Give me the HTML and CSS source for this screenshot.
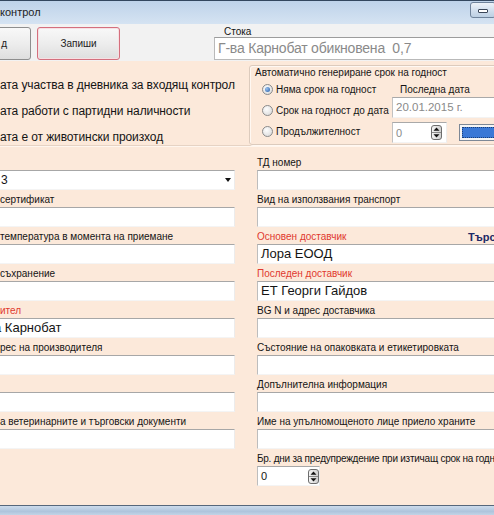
FILE: index.html
```html
<!DOCTYPE html>
<html lang="bg">
<head>
<meta charset="utf-8">
<title>контрол</title>
<link rel="stylesheet" href="styles.css">
</head>
<body>
<div class="window">
  <header class="titlebar">
    <span class="title">контрол</span>
    <span class="min-btn"><span class="min-glyph"></span></span>
  </header>
  <div class="toolbar">
    <button class="btn btn-exit">д</button>
    <button class="btn btn-save">Запиши</button>
    <div class="stock">
      <div class="stock-label">Стока</div>
      <div class="stock-input">Г-ва Карнобат обикновена&nbsp; 0,7</div>
    </div>
  </div>
  <main class="form">
    <div class="top">
      <div class="checks">
        <div class="check">ата участва в дневника за входящ контрол</div>
        <div class="check">ата работи с партидни наличности</div>
        <div class="check">ата е от животински произход</div>
      </div>
      <div class="expiry">
        <div class="legend">Автоматично генериране срок на годност</div>
        <div class="exp-body">
          <div class="radios">
            <div class="radio-row"><span class="radio on"></span>Няма срок на годност</div>
            <div class="radio-row"><span class="radio"></span>Срок на годност до дата</div>
            <div class="radio-row"><span class="radio"></span>Продължителност</div>
          </div>
          <div class="exp-right">
            <div class="last-label">Последна дата</div>
            <div class="date-input">20.01.2015 г.</div>
            <div class="spin-row">
              <div class="num-input"><span>0</span>
                <svg class="spin" width="11" height="15" viewBox="0 0 11 15"><defs><linearGradient id="sg" x1="0" y1="0" x2="1" y2="0"><stop offset="0" stop-color="#f6f6f6"/><stop offset="1" stop-color="#cfcfcf"/></linearGradient></defs><rect x="0.5" y="0.5" width="10" height="14" rx="2.5" fill="url(#sg)" stroke="#6d6d6d"/><line x1="1" y1="7.5" x2="10" y2="7.5" stroke="#8a8a8a"/><path d="M5.5 2.5 L8.5 5.8 L2.5 5.8 Z" fill="#111"/><path d="M2.5 9.2 L8.5 9.2 L5.5 12.5 Z" fill="#111"/></svg>
              </div>
              <div class="blue-btn"><span class="blue-fill"></span></div>
            </div>
          </div>
        </div>
      </div>
    </div>
    <div class="fields">
      <div class="col col-left">
        <div class="field"><div class="lbl"></div><div class="inp combo"><span>3</span><span class="arrow"></span></div></div>
        <div class="field"><div class="lbl">сертификат</div><div class="inp"></div></div>
        <div class="field"><div class="lbl">температура в момента на приемане</div><div class="inp"></div></div>
        <div class="field"><div class="lbl">съхранение</div><div class="inp"></div></div>
        <div class="field"><div class="lbl red">ител</div><div class="inp"><span class="cut">а Карнобат</span></div></div>
        <div class="field"><div class="lbl">рес на производителя</div><div class="inp"></div></div>
        <div class="field"><div class="lbl"></div><div class="inp"></div></div>
        <div class="field"><div class="lbl">а ветеринарните и търговски документи</div><div class="inp"></div></div>
      </div>
      <div class="col col-right">
        <div class="field"><div class="lbl">ТД номер</div><div class="inp"></div></div>
        <div class="field"><div class="lbl">Вид на използвания транспорт</div><div class="inp"></div></div>
        <div class="field"><div class="lbl split"><span class="lbl-main red">Основен доставчик</span><span class="search">Търсене</span></div><div class="inp">Лора ЕООД</div></div>
        <div class="field"><div class="lbl red">Последен доставчик</div><div class="inp">ЕТ Георги Гайдов</div></div>
        <div class="field"><div class="lbl">BG N и адрес доставчика</div><div class="inp"></div></div>
        <div class="field"><div class="lbl">Състояние на опаковката и етикетировката</div><div class="inp"></div></div>
        <div class="field"><div class="lbl">Допълнителна информация</div><div class="inp"></div></div>
        <div class="field"><div class="lbl">Име на упълномощеното лице приело храните</div><div class="inp"></div></div>
        <div class="field warn"><div class="lbl tight">Бр. дни за предупреждение при изтичащ срок на годност</div>
          <div class="inp num"><span>0</span>
            <svg class="spin" width="11" height="15" viewBox="0 0 11 15"><defs><linearGradient id="sg2" x1="0" y1="0" x2="1" y2="0"><stop offset="0" stop-color="#f6f6f6"/><stop offset="1" stop-color="#cfcfcf"/></linearGradient></defs><rect x="0.5" y="0.5" width="10" height="14" rx="2.5" fill="url(#sg2)" stroke="#6d6d6d"/><line x1="1" y1="7.5" x2="10" y2="7.5" stroke="#8a8a8a"/><path d="M5.5 2.5 L8.5 5.8 L2.5 5.8 Z" fill="#111"/><path d="M2.5 9.2 L8.5 9.2 L5.5 12.5 Z" fill="#111"/></svg>
          </div>
        </div>
      </div>
    </div>
  </main>
  <div class="frame-bottom"></div>
</div>
</body>
</html>
```
FILE: styles.css
```css
html, body {
  margin: 0;
  padding: 0;
}
body {
  width: 494px;
  height: 515px;
  overflow: hidden;
  font-family: "Liberation Sans", Arial, sans-serif;
  color: #141414;
  background: #fce9da;
}
.window {
  width: 494px;
  height: 515px;
  display: flex;
  flex-direction: column;
  overflow: hidden;
}

/* title bar */
.titlebar {
  height: 24px;
  flex: none;
  box-sizing: border-box;
  border-top: 1px solid #33475f;
  background: linear-gradient(#bed3ea, #d5e3f2);
  display: flex;
  align-items: flex-start;
}
.title {
  font-size: 11px;
  line-height: 23px;
  color: #1e1e1e;
  white-space: nowrap;
}
.min-btn {
  margin-left: auto;
  margin-right: -2px;
  margin-top: 1px;
  width: 26px;
  height: 16px;
  box-sizing: border-box;
  border: 1px solid #6f839b;
  border-radius: 3px;
  background: linear-gradient(#eef3f9, #d3e0ee 50%, #bccfe3);
  display: flex;
  align-items: center;
  justify-content: center;
}
.min-glyph {
  width: 10px;
  height: 4px;
  box-sizing: border-box;
  border: 1px solid #3a4658;
  background: #fff;
  border-radius: 1px;
  margin-top: 2px;
}

/* toolbar */
.toolbar {
  height: 37px;
  flex: none;
  box-sizing: border-box;
  padding-top: 3px;
  background: #f2f2f2;
  display: flex;
  align-items: flex-start;
}
.btn {
  flex: none;
  height: 33px;
  box-sizing: border-box;
  padding: 0;
  font-family: "Liberation Sans", Arial, sans-serif;
  font-size: 10px;
  color: #222;
  border: 1px solid #8e8e8e;
  border-radius: 3px;
  background: linear-gradient(#f8f8f8, #ededed 50%, #dedede);
}
.btn-exit {
  width: 75px;
  margin-left: -44px;
  text-align: right;
  padding-right: 23px;
}
.btn-save {
  width: 83px;
  margin-left: 6px;
  border-color: #d46f7d;
  box-shadow: inset 0 0 0 1px #f6e0e3;
}
.stock {
  margin-left: 94px;
  margin-top: -3px;
  flex: none;
}
.stock-label {
  font-size: 10px;
  height: 13px;
  line-height: 10px;
  padding-top: 3px;
  padding-left: 10px;
  box-sizing: border-box;
}
.stock-input {
  width: 300px;
  height: 23px;
  box-sizing: border-box;
  border: 1px solid #b9b9b9;
  border-top-color: #9c9c9c;
  background: #fff;
  font-size: 14px;
  letter-spacing: -0.2px;
  line-height: 21px;
  color: #8a8a8a;
  padding-left: 3px;
  white-space: nowrap;
}

/* form */
.form {
  flex: 1;
  background: #fce9da;
}
.top {
  display: flex;
  padding-top: 3px;
  height: 81px;
  border-bottom: 1px solid #e6d3c4;
  box-shadow: 0 1px 0 #fff6ee;
}
.checks {
  width: 249px;
  flex: none;
  box-sizing: border-box;
  padding-top: 8px;
}
.check {
  font-size: 12px;
  line-height: 26px;
  letter-spacing: -0.1px;
  white-space: nowrap;
}
.expiry {
  width: 260px;
  height: 80px;
  margin-top: 1px;
  flex: none;
  box-sizing: border-box;
  border: 1px solid #dccbbd;
  border-radius: 3px;
  box-shadow: inset 1px 1px 0 #fff8f2, 1px 1px 0 #fff8f2;
}
.legend {
  font-size: 10px;
  line-height: 13px;
  padding-left: 5px;
  white-space: nowrap;
}
.exp-body {
  display: flex;
}
.radios {
  margin-left: 12px;
  width: 130px;
  flex: none;
}
.radio-row {
  display: flex;
  align-items: center;
  height: 21px;
  font-size: 10px;
  white-space: nowrap;
}
.radio {
  width: 11px;
  height: 11px;
  box-sizing: border-box;
  border-radius: 50%;
  border: 1px solid #8a8a8a;
  background: radial-gradient(circle at 40% 35%, #fdfdfd, #d6d6d6);
  margin-right: 3px;
  display: flex;
  align-items: center;
  justify-content: center;
}
.radio.on::after {
  content: "";
  width: 5px;
  height: 5px;
  border-radius: 50%;
  background: radial-gradient(circle at 35% 35%, #9cc2ee, #1f5aa8);
}
.exp-right {
  display: flex;
  flex-direction: column;
}
.last-label {
  font-size: 10px;
  line-height: 13px;
  margin-top: 4px;
  padding-left: 8px;
  white-space: nowrap;
}
.date-input {
  margin-top: 1px;
  width: 110px;
  height: 21px;
  box-sizing: border-box;
  background: #fff;
  border: 1px solid;
  border-color: #a9a9a9 #eeeeee #f3f3f3 #c2c2c2;
  font-size: 11.5px;
  line-height: 19px;
  color: #8a8a8a;
  padding-left: 3px;
  white-space: nowrap;
}
.spin-row {
  margin-top: 4px;
  display: flex;
  align-items: center;
}
.num-input {
  width: 55px;
  height: 21px;
  box-sizing: border-box;
  background: #fff;
  border: 1px solid;
  border-color: #a9a9a9 #eeeeee #f3f3f3 #c2c2c2;
  display: flex;
  align-items: center;
  justify-content: space-between;
  font-size: 11px;
  color: #8a8a8a;
  padding-left: 3px;
  padding-right: 4px;
}
.spin {
  display: block;
  flex: none;
}
.blue-btn {
  margin-left: 12px;
  width: 40px;
  height: 17px;
  box-sizing: border-box;
  border: 1px solid #7d8896;
  padding: 2px;
  background: #f4f4f4;
  display: flex;
}
.blue-fill {
  flex: 1;
  background: #3a78d6;
  border: 1px dotted #1c3f78;
}

/* fields */
.fields {
  display: grid;
  grid-template-columns: 241px 260px;
  column-gap: 22px;
  margin-left: -6px;
  margin-top: 9px;
}
.field {
  margin-bottom: 2px;
}
.field.warn {
  margin-top: 1px;
}
.lbl {
  font-size: 10px;
  line-height: 14px;
  height: 15px;
  padding-top: 1px;
  box-sizing: border-box;
  white-space: nowrap;
}
.lbl.tight {
  letter-spacing: -0.25px;
}
.inp {
  height: 20px;
  box-sizing: border-box;
  background: #fff;
  border: 1px solid;
  border-color: #a7a7a7 #ececec #f4f4f4 #bdbdbd;
  font-size: 13px;
  line-height: 18px;
  padding-left: 3px;
  white-space: nowrap;
  overflow: hidden;
}
.col-left .lbl,
.col-left .inp {
  padding-left: 6px;
}
.cut {
  display: inline-block;
  margin-left: -7px;
}
.red {
  color: #e0392f;
}
.split {
  display: flex;
}
.lbl-main {
  width: 211px;
  flex: none;
}
.search {
  font-size: 11px;
  font-weight: bold;
  color: #1c2a66;
}
.combo {
  display: flex;
  align-items: center;
  justify-content: space-between;
  font-size: 12px;
}
.arrow {
  width: 0;
  height: 0;
  border-left: 3.5px solid transparent;
  border-right: 3.5px solid transparent;
  border-top: 4px solid #111;
  margin-right: 3px;
}
.inp.num {
  width: 63px;
  display: flex;
  align-items: center;
  justify-content: space-between;
  font-size: 11px;
  padding-right: 0;
}

.frame-bottom {
  height: 10px;
  flex: none;
  box-sizing: border-box;
  border-top: 1px solid #56677b;
  background: linear-gradient(#cddcec, #aec4dc 60%, #c2d4e6);
}
```
